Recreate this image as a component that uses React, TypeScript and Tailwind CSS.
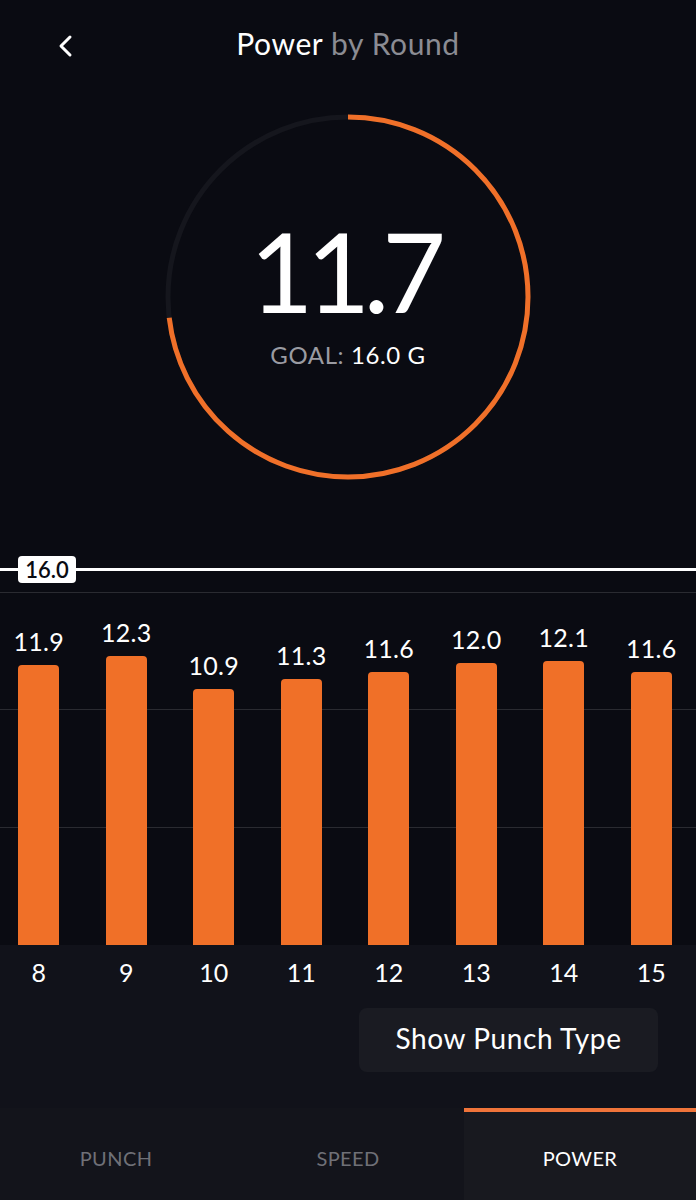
import React from "react";

const rounds = [
  { round: 8, value: 11.9 },
  { round: 9, value: 12.3 },
  { round: 10, value: 10.9 },
  { round: 11, value: 11.3 },
  { round: 12, value: 11.6 },
  { round: 13, value: 12.0 },
  { round: 14, value: 12.1 },
  { round: 15, value: 11.6 },
];

const PX_PER_G = 23.5;
const GOAL = 16.0;
const CURRENT = 11.7;

const Ring = () => {
  const r = 180;
  const c = 2 * Math.PI * r;
  const filled = (CURRENT / GOAL) * c;
  return (
    <svg width="366" height="366" viewBox="0 0 366 366" className="[grid-area:1/1]">
      <circle cx="183" cy="183" r={r} fill="none" stroke="#15161d" strokeWidth="5" />
      <circle
        cx="183"
        cy="183"
        r={r}
        fill="none"
        stroke="#f07029"
        strokeWidth="5"
        strokeDasharray={`${filled} ${c}`}
        transform="rotate(-90 183 183)"
      />
    </svg>
  );
};

export default function App() {
  return (
    <div className="w-[696px] h-[1200px] bg-[#0a0b12] flex flex-col overflow-hidden font-['Lato',sans-serif] text-white">
      {/* Header */}
      <div className="h-[90px] grid grid-cols-[1fr_auto_1fr] items-center">
        <div className="pl-[56px] pt-[2px]">
          <svg width="18" height="24" viewBox="0 0 18 24">
            <polyline points="14,3 5,12 14,21" fill="none" stroke="#fff" strokeWidth="3" strokeLinecap="round" strokeLinejoin="round" />
          </svg>
        </div>
        <h1 className="text-[30px] tracking-[0.6px] mb-[4px]">
          Power <span className="text-[#8b8c93]">by Round</span>
        </h1>
        <div />
      </div>

      {/* Ring */}
      <div className="mt-[24px] flex justify-center">
        <div className="grid place-items-center">
          <Ring />
          <div className="[grid-area:1/1] flex flex-col items-center mb-[12px]">
            <div className="text-[110px] leading-none tracking-[-7px] pr-[7px]">11.7</div>
            <div className="mt-[18px] text-[24px] leading-none tracking-[0.6px]">
              <span className="text-[#9a9ba2]">GOAL:</span> 16.0 G
            </div>
          </div>
        </div>
      </div>

      {/* Chart */}
      <div className="mt-[65px] relative h-[400px] overflow-hidden">
        {[15, 10, 5].map((g) => (
          <div
            key={g}
            className="absolute left-0 right-0 h-px bg-[#2a2b31]"
            style={{ bottom: g * PX_PER_G }}
          />
        ))}
        <div className="relative ml-[-5px] w-[700px] h-full grid grid-cols-8 items-end">
          {rounds.map((r) => (
            <div key={r.round} className="flex flex-col items-center">
              <div className="text-[25px] leading-none mb-[11px] tracking-[0.3px]">{r.value.toFixed(1)}</div>
              <div
                className="w-[41px] bg-[#f07028] rounded-t-[4px]"
                style={{ height: r.value * PX_PER_G }}
              />
            </div>
          ))}
        </div>
        <div
          className="absolute left-0 right-0 h-[3px] bg-white"
          style={{ bottom: GOAL * PX_PER_G - 1.5 }}
        />
        <div
          className="absolute left-[18px] w-[58px] h-[27px] bg-white rounded-[4px] text-[#0a0b12] text-[22px] font-semibold leading-[27px] text-center"
          style={{ bottom: GOAL * PX_PER_G - 13.5 }}
        >
          16.0
        </div>
      </div>

      {/* Lower area */}
      <div className="flex-1 bg-[#11121a] flex flex-col">
        <div className="ml-[-5px] w-[700px] grid grid-cols-8 pt-[12px]">
          {rounds.map((r) => (
            <div key={r.round} className="text-center text-[25px] leading-[30px]">
              {r.round}
            </div>
          ))}
        </div>
        <div className="mt-[21px] flex justify-end pr-[38px]">
          <button className="w-[299px] h-[64px] rounded-[8px] bg-[#1a1b22] text-[28px] tracking-[0.6px] text-white pb-[4px]">
            Show Punch Type
          </button>
        </div>
        <div className="mt-auto h-[92px] bg-[#13141b] grid grid-cols-3">
          <div className="flex items-center justify-center pt-[8px] text-[20px] tracking-[0.4px] text-[#6f7077]">PUNCH</div>
          <div className="flex items-center justify-center pt-[8px] text-[20px] tracking-[0.4px] text-[#6f7077]">SPEED</div>
          <div className="flex items-center justify-center pt-[4px] text-[20px] tracking-[0.4px] text-white bg-[#18191f] border-t-4 border-[#f0743a]">
            POWER
          </div>
        </div>
      </div>
    </div>
  );
}
